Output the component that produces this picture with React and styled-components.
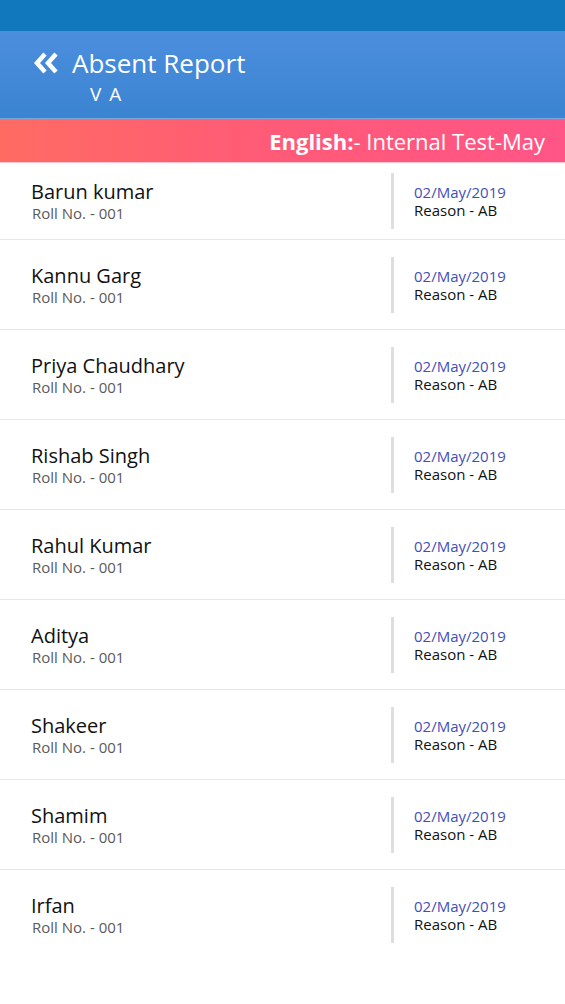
import React from "react";
import styled, { createGlobalStyle } from "styled-components";

const students = [
  "Barun kumar",
  "Kannu Garg",
  "Priya Chaudhary",
  "Rishab Singh",
  "Rahul Kumar",
  "Aditya",
  "Shakeer",
  "Shamim",
  "Irfan",
];

const Global = createGlobalStyle`
  body {
    margin: 0;
    background: #fff;
    font-family: "Open Sans", "Noto Sans", sans-serif;
  }
`;

const BackIcon = () => (
  <svg width="27" height="24" viewBox="0 0 27 24">
    <polyline points="12,3 4,12 12,21" fill="none" stroke="#fff" strokeWidth="4.5" />
    <polyline points="23,3 15,12 23,21" fill="none" stroke="#fff" strokeWidth="4.5" />
  </svg>
);

const App = () => {
  return (
    <Page>
      <Global />
      <StatusBar />
      <Header>
        <TitleRow>
          <BackIcon />
          <Title>Absent Report</Title>
        </TitleRow>
        <SubTitle>V A</SubTitle>
      </Header>
      <SubjectBar>
        <b>English:</b>- Internal Test-May
      </SubjectBar>
      {students.map((name, i) => (
        <Row key={name} first={i === 0}>
          <Student>
            <Name>{name}</Name>
            <Roll>Roll No. - 001</Roll>
          </Student>
          <Detail>
            <DateText>02/May/2019</DateText>
            <Reason>Reason - AB</Reason>
          </Detail>
        </Row>
      ))}
    </Page>
  );
};

export default App;

const Page = styled.div`
  width: 565px;
  min-height: 1004px;
  background: #fff;
`;

const StatusBar = styled.div`
  height: 31px;
  background: #1278be;
`;

const Header = styled.div`
  height: 88px;
  box-sizing: border-box;
  padding: 17px 0 0 33px;
  background: linear-gradient(180deg, #4c8ede 0%, #3a84d1 100%);
  border-bottom: 1px solid #7aa6dc;
  color: #fff;
`;

const TitleRow = styled.div`
  display: flex;
  align-items: center;
  gap: 12px;
`;

const Title = styled.div`
  font-size: 26px;
  line-height: 30px;
`;

const SubTitle = styled.div`
  margin: 4px 0 0 57px;
  font-size: 19px;
  letter-spacing: 1.5px;
  line-height: 24px;
`;

const SubjectBar = styled.div`
  height: 44px;
  box-sizing: border-box;
  padding-right: 20px;
  display: flex;
  align-items: center;
  justify-content: flex-end;
  background: linear-gradient(90deg, #ff6b63 0%, #ff5a78 50%, #ff5587 100%);
  border-bottom: 1px solid #ffc4cf;
  color: #fff;
  font-size: 22px;

  b {
    font-weight: 700;
  }
`;

const Row = styled.div`
  height: ${(p) => (p.first ? 77 : 90)}px;
  box-sizing: border-box;
  display: flex;
  align-items: center;
  border-bottom: 1px solid #e6e6e6;
  &:last-child {
    border-bottom: none;
  }
`;

const Student = styled.div`
  width: 360px;
  padding-left: 31px;
  display: flex;
  flex-direction: column;
`;

const Name = styled.div`
  font-size: 20px;
  line-height: 24px;
  color: #111;
`;

const Roll = styled.div`
  margin-left: 1px;
  font-size: 15px;
  line-height: 18px;
  color: #5a5a5a;
`;

const Detail = styled.div`
  height: 56px;
  box-sizing: border-box;
  border-left: 3px solid #dedede;
  padding-left: 20px;
  display: flex;
  flex-direction: column;
  justify-content: center;
`;

const DateText = styled.div`
  font-size: 15px;
  line-height: 18px;
  color: #3f4fb8;
`;

const Reason = styled.div`
  font-size: 15px;
  line-height: 18px;
  color: #111;
`;
